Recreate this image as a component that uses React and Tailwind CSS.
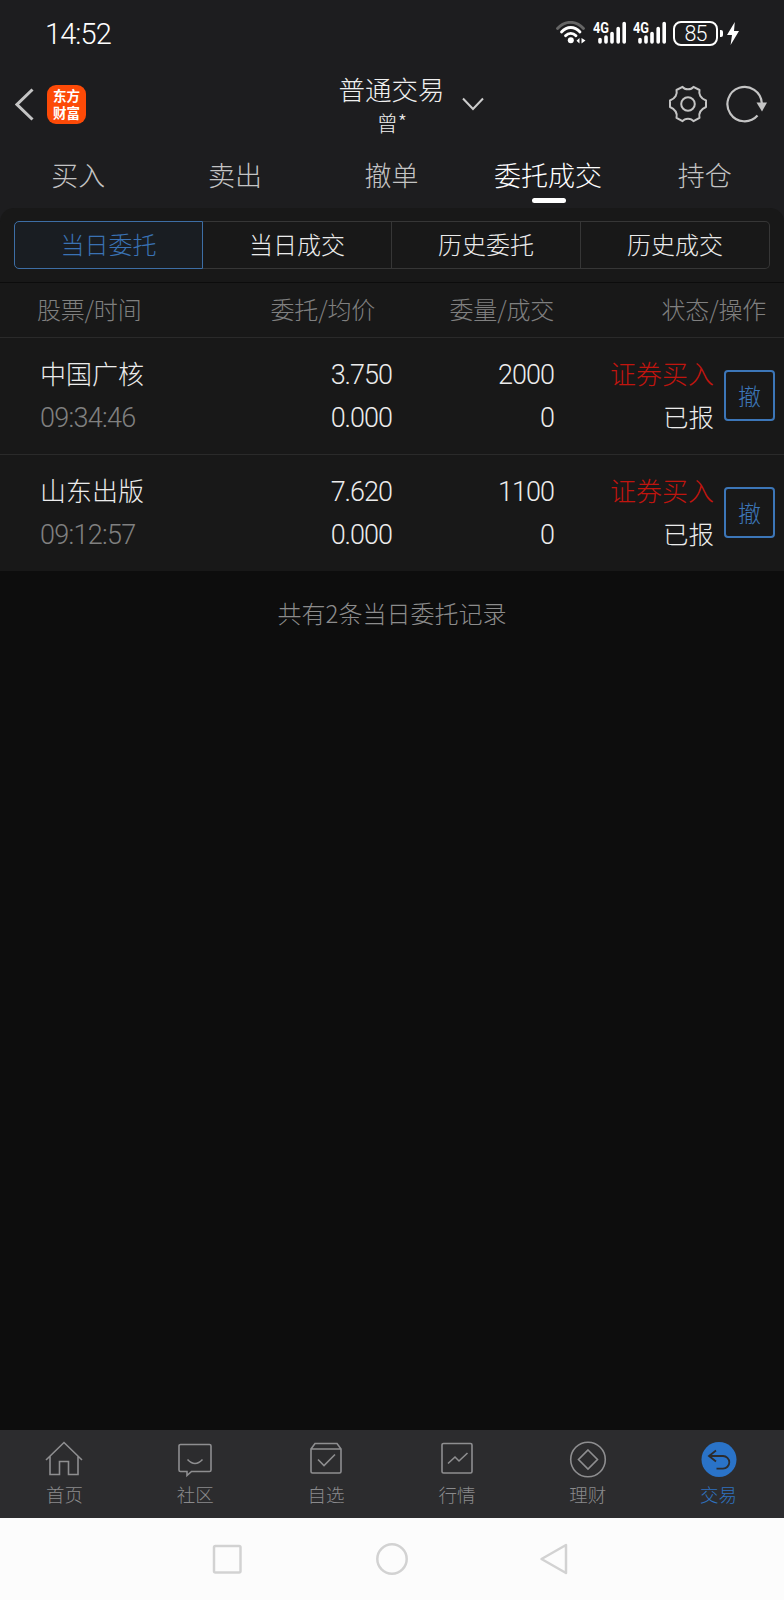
const topTabs = ['买入', '卖出', '撤单', '委托成交', '持仓'];
const segments = ['当日委托', '当日成交', '历史委托', '历史成交'];

const orders = [
  { name: '中国广核', time: '09:34:46', price: '3.750', avg: '0.000', qty: '2000', done: '0', side: '证券买入', status: '已报' },
  { name: '山东出版', time: '09:12:57', price: '7.620', avg: '0.000', qty: '1100', done: '0', side: '证券买入', status: '已报' },
];

function Signal() {
  return (
    <svg width="34" height="24" viewBox="0 0 34 24" fill="none" stroke="#fff" strokeWidth="3.6" strokeLinecap="round">
      <text x="0" y="11.5" fill="#fff" stroke="none" fontSize="14" fontWeight="700" fontFamily="Roboto, sans-serif" textLength="16" lengthAdjust="spacingAndGlyphs">4G</text>
      <path d="M7 18.500v2.500M13 16v5M19 12.500v8.500M25.200 7.500v13.500M31.200 2.500v18.500" />
    </svg>
  );
}

function StatusBar() {
  return (
    <div className="flex h-[66px] items-center justify-between pl-[45px] pr-[45px]">
      <span className="pt-[2px] font-[Roboto,sans-serif] text-[29px] leading-none tracking-[-0.9px] text-white">14:52</span>
      <div className="flex items-center">
        <svg width="30" height="24" viewBox="0 0 30 24" fill="none" strokeLinecap="round" className="mr-[7px]">
          <path d="M1.5 7.5C9-.8 20-.8 27.500 7.500" stroke="#666" strokeWidth="2.800" />
          <path d="M5.500 11C11 5 18.500 5 24 11M9.500 14.800C12.500 11.500 17 11.500 20 14.800" stroke="#fff" strokeWidth="2.800" />
          <circle cx="14.800" cy="19.300" r="3" fill="#fff" />
          <path d="M23.500 17v5.500l-3-2.700zM25.500 17v5.500l4-3z" fill="#fff" />
        </svg>
        <Signal />
        <span className="w-[6px]" />
        <Signal />
        <span className="ml-[6px] flex h-[25px] w-[45px] items-center justify-center rounded-[8px] border-2 border-white pt-[1px] font-[Roboto,sans-serif] text-[21.500px] leading-none tracking-[-1px] text-white">85</span>
        <span className="ml-[2px] h-[7px] w-[3px] rounded-r-[2px] bg-white" />
        <svg width="12" height="23" viewBox="0 0 12 23" fill="#fff" className="ml-[4px]">
          <path d="M7.800 0 0 13h5L3.600 23 12 9H7z" />
        </svg>
      </div>
    </div>
  );
}

function TitleBar() {
  return (
    <div className="flex h-[76px] items-center pl-[15px] pr-[17px]">
      <div className="flex w-[323px] items-center">
        <svg width="19" height="33" viewBox="0 0 19 33" fill="none" stroke="#c4c4c4" strokeWidth="3">
          <path d="M17.500 1.500 2 16.500l15.500 15" />
        </svg>
        <div className="ml-[13px] flex h-[39px] w-[39px] items-center justify-center rounded-[9px] bg-[#fd4a07] pb-[1px] text-center text-[13.500px] font-bold leading-[17px] text-white">
          东方
          <br />
          财富
        </div>
      </div>
      <div className="flex w-[107px] flex-col items-center pt-[3px] text-[#f0f0f0]">
        <span className="text-[26.500px] leading-[33px]">普通交易</span>
        <span className="pl-[1px] text-[21px] leading-[34px]">曾*</span>
      </div>
      <svg width="22" height="14" viewBox="0 0 22 14" fill="none" stroke="#ccc" strokeWidth="2" className="ml-[17px]">
        <path d="M1 1.500 11 12 21 1.500" />
      </svg>
      <div className="flex flex-1 items-center justify-end gap-[19px]">
        <svg width="38" height="38" viewBox="0 0 38 38" fill="none" stroke="#c4c4c4" strokeWidth="2" strokeLinejoin="round">
          <path d="M13.500 1.800C16 5.200 22 5.200 24.500 1.800L30.500 5C29.500 9 31.500 13.500 37 15.500V22C31.500 24.500 29.500 28.500 30.500 32.800L24.500 36.200C22 32.800 16 32.800 13.500 36.200L7.500 32.800C8.500 28.500 6.500 24.500 1 22V15.500C6.500 13.500 8.500 9 7.500 5Z" />
          <circle cx="19" cy="19" r="6.800" />
        </svg>
        <svg width="41" height="38" viewBox="0 0 41 38" fill="none">
          <path d="M31.500 30.500A17.200 17.200 0 1 1 35.800 18" stroke="#c4c4c4" strokeWidth="2.200" />
          <path d="M30.500 17.500h10.500l-5 9z" fill="#c4c4c4" />
        </svg>
      </div>
    </div>
  );
}

function TopTabs() {
  return (
    <div className="grid h-[66px] grid-cols-5 pr-[1px]">
      {topTabs.map((tab) => {
        const active = tab === '委托成交';
        return (
          <div key={tab} className={`flex flex-col items-center pt-[13px] text-[27px] leading-[40px] ${active ? 'text-white' : 'text-[#c4c4c4]'}`}>
            {tab}
            {active && <span className="ml-[2px] mt-[3px] h-[5px] w-[34px] rounded-full bg-white" />}
          </div>
        );
      })}
    </div>
  );
}

function Segments() {
  return (
    <div className="flex h-[75px] border-b border-[#0c0c0c] px-[14px] pt-[13px]">
      {segments.map((item, i) => {
        let style = 'border-y border-r border-[#363636] text-[#ececec]';
        if (i === 0) style = 'rounded-l-[5px] border border-[#3d6ea5] bg-[#191d22] text-[#3a72b4]';
        if (i === 3) style += ' rounded-r-[5px]';
        return (
          <div key={item} className={`flex h-[48px] w-[189px] items-center justify-center pb-[2px] text-[24px] leading-none ${style}`}>
            {item}
          </div>
        );
      })}
    </div>
  );
}

function TableHead() {
  return (
    <div className="flex h-[55px] items-center border-b border-[#2a2a2a] pb-[2px] pl-[37px] pr-[18px] text-[24px] leading-none tracking-[-0.2px] text-[#808080]">
      <span className="w-[178px]">股票/时间</span>
      <span className="w-[160px] text-right">委托/均价</span>
      <span className="w-[179px] text-right">委量/成交</span>
      <span className="flex-1 text-right">状态/操作</span>
    </div>
  );
}

function OrderRow({ order }) {
  return (
    <div className="flex h-[117px] items-center border-b border-[#2a2a2a] pb-[2px] pl-[40px] pr-[9px] text-[26px] leading-[43px] text-[#ececec] last:h-[116px] last:border-b-0">
      <div className="flex w-[160px] flex-col pt-[4px]">
        <span className="-mt-[3px] mb-[3px]">{order.name}</span>
        <span className="font-[Roboto,sans-serif] text-[27px] tracking-[-0.7px] text-[#808080]">{order.time}</span>
      </div>
      <div className="flex w-[192px] flex-col pt-[4px] text-right font-[Roboto,sans-serif] text-[27px] tracking-[-1px]">
        <span>{order.price}</span>
        <span>{order.avg}</span>
      </div>
      <div className="flex w-[162px] flex-col pt-[4px] text-right font-[Roboto,sans-serif] text-[27px] tracking-[-1px]">
        <span>{order.qty}</span>
        <span>{order.done}</span>
      </div>
      <div className="flex w-[160px] flex-col pb-[2px] text-right">
        <span className="text-[#c0150f]">{order.side}</span>
        <span className="text-[25.500px]">{order.status}</span>
      </div>
      <button className="ml-auto flex h-[51px] w-[51px] items-center justify-center rounded-[4px] border-2 border-[#3c76b8] text-[23px] leading-none text-[#3c76b8]">
        撤
      </button>
    </div>
  );
}

const navItems = [
  {
    label: '首页',
    icon: <path d="M1 19 19 1.500 37 19M5 15.500V33.500H14.500V20.500H23.500V33.500H33V15.500" />,
  },
  {
    label: '社区',
    icon: <path d="M4.500 3.500h29a1.500 1.500 0 0 1 1.500 1.500v24a1.500 1.500 0 0 1-1.500 1.500H15.500L11 34.500V30.500H4.500A1.500 1.500 0 0 1 3 29V5a1.500 1.500 0 0 1 1.500-1.500zM11.500 18.500q7.500 8 15 0" />,
  },
  {
    label: '自选',
    icon: <path d="M4 8 8 2.500H30L34 8V30.500a1.500 1.500 0 0 1-1.500 1.500h-27A1.500 1.500 0 0 1 4 30.500ZM4 8H34M11 18.500l6 6L28 13.500" />,
  },
  {
    label: '行情',
    icon: <path d="M5.500 2.500h27a1.500 1.500 0 0 1 1.500 1.500v26.500a1.500 1.500 0 0 1-1.500 1.500h-27A1.500 1.500 0 0 1 4 30.500V4a1.500 1.500 0 0 1 1.500-1.500zM10 22.500l7-6.500 4 4 8.500-8" />,
  },
  {
    label: '理财',
    icon: <path d="M19 1.200a17.300 17.300 0 1 1 0 34.600 17.300 17.300 0 1 1 0-34.600zM19 9l9.500 9.500L19 28 9.500 18.500z" />,
  },
  {
    label: '交易',
    active: true,
    icon: (
      <>
        <circle cx="19" cy="18.500" r="17.500" fill="#2a73c8" stroke="none" />
        <path d="M16 9.500 9 15 16 20.500M9 15H23a6.300 6.300 0 0 1 0 12.600H16.500" stroke="#2c2c2e" strokeWidth="1.800" />
      </>
    ),
  },
];

function BottomNav() {
  return (
    <div className="-ml-[1px] grid h-[88px] grid-cols-6 bg-[#2c2c2e]">
      {navItems.map((item) => (
        <div key={item.label} className={`flex flex-col items-center pt-[11px] text-[18.500px] leading-[32px] ${item.active ? 'text-[#2f72bf]' : 'text-[#8a8a8c]'}`}>
          <svg width="38" height="37" viewBox="0 0 38 37" fill="none" stroke="#8e8e90" strokeWidth="1.600">
            {item.icon}
          </svg>
          {item.label}
        </div>
      ))}
    </div>
  );
}

function SystemNav() {
  return (
    <div className="flex h-[82px] items-center justify-center gap-[132px] bg-[#fcfcfc]">
      <svg width="32" height="32" viewBox="0 0 32 32" fill="none" stroke="#d2d2d2" strokeWidth="2.500">
        <rect x="2" y="3" width="26.500" height="26.500" rx="1.500" />
      </svg>
      <svg width="32" height="32" viewBox="0 0 32 32" fill="none" stroke="#d2d2d2" strokeWidth="2.500">
        <circle cx="16" cy="16" r="14.700" />
      </svg>
      <svg width="32" height="32" viewBox="0 0 32 32" fill="none" stroke="#d2d2d2" strokeWidth="2.500" strokeLinejoin="round">
        <path d="M26 2V30L1.500 16z" />
      </svg>
    </div>
  );
}

export default function App() {
  return (
    <div className="flex h-[1600px] w-[784px] flex-col overflow-hidden bg-[#0d0d0d] font-['Noto_Sans_CJK_SC',sans-serif] font-light">
      <div className="bg-[#1d1d1f]">
        <StatusBar />
        <TitleBar />
        <TopTabs />
        <div className="rounded-t-[14px] bg-[#181818]">
          <Segments />
          <TableHead />
          <div>
            {orders.map((order) => (
              <OrderRow key={order.name} order={order} />
            ))}
          </div>
        </div>
      </div>
      <div className="flex-1 pt-[24px] text-center text-[24px] leading-[36px] text-[#8c8c8c]">共有2条当日委托记录</div>
      <BottomNav />
      <SystemNav />
    </div>
  );
}
